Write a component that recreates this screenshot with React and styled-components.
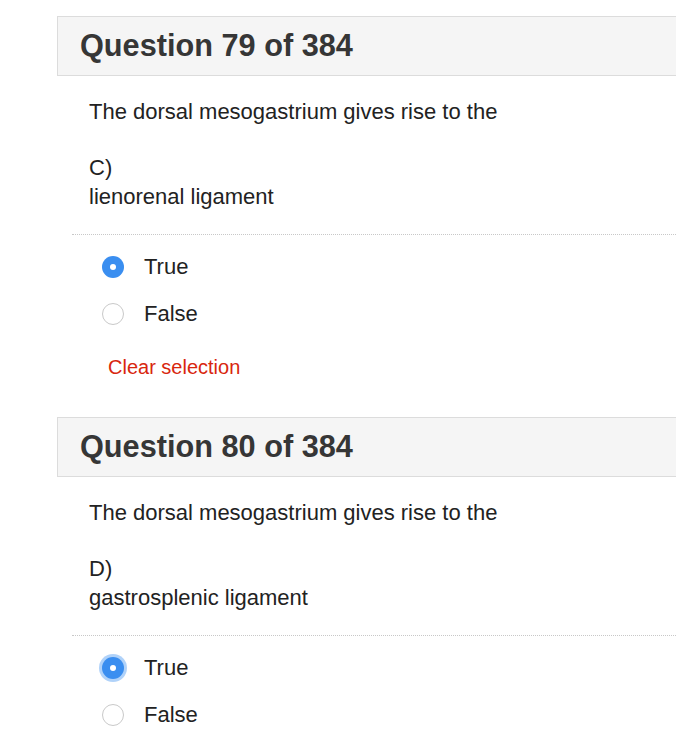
import React from 'react'
import styled, { createGlobalStyle, css } from 'styled-components'

const GlobalStyle = createGlobalStyle`
  body {
    margin: 0;
    background: #fff;
    font-family: 'Liberation Sans', Helvetica, Arial, sans-serif;
    color: #222;
  }
`

const Page = styled.div`
  width: 676px;
  overflow: hidden;
  padding-top: 16px;
`

const Section = styled.section`
  margin-left: 57px;
  margin-bottom: 35px;
`

const Header = styled.div`
  height: 58px;
  margin-right: -30px;
  display: flex;
  align-items: center;
  padding-left: 22px;
  background: #f5f5f5;
  border: 1px solid #dcdcdc;
`

const Title = styled.h2`
  margin: 0;
  font-size: 30.7px;
  font-weight: bold;
  color: #363636;
`

const Body = styled.div`
  padding: 21px 0 0 32px;
  font-size: 22px;
  line-height: 29px;
`

const Stem = styled.p`
  margin: 0 0 27px;
`

const Answer = styled.p`
  margin: 0;
`

const Divider = styled.hr`
  margin: 23px -30px 8px 15px;
  border: 0;
  border-top: 1px dotted #c8c8c8;
`

const Options = styled.div`
  padding-left: 45px;
`

const Option = styled.label`
  display: flex;
  align-items: center;
  height: 47px;
  font-size: 22px;
  color: #222;
`

const Radio = styled.span`
  box-sizing: border-box;
  width: 22px;
  height: 22px;
  border-radius: 50%;
  margin-right: 20px;
  border: 1px solid #c9c9c9;
  background: #fff;
  display: flex;
  align-items: center;
  justify-content: center;

  ${({ checked }) =>
    checked &&
    css`
      border: none;
      background: #3a8ef0;
      &::after {
        content: '';
        width: 6px;
        height: 6px;
        border-radius: 50%;
        background: #fff;
      }
    `}

  ${({ focused }) =>
    focused &&
    css`
      box-shadow: 0 0 0 3px rgba(58, 142, 240, 0.4);
    `}
`

const Clear = styled.a`
  display: block;
  margin: 16px 0 0 51px;
  font-size: 20px;
  line-height: 29px;
  color: #d8260e;
`

const questions = [
  { num: 79, letter: 'C)', answer: 'lienorenal ligament', focused: false, clear: true },
  { num: 80, letter: 'D)', answer: 'gastrosplenic ligament', focused: true, clear: false },
]

const App = () => {
  return (
    <Page>
      <GlobalStyle />
      {questions.map((q) => (
        <Section key={q.num}>
          <Header>
            <Title>Question {q.num} of 384</Title>
          </Header>
          <Body>
            <Stem>The dorsal mesogastrium gives rise to the</Stem>
            <Answer>{q.letter}</Answer>
            <Answer>{q.answer}</Answer>
          </Body>
          <Divider />
          <Options>
            <Option>
              <Radio checked focused={q.focused} />
              True
            </Option>
            <Option>
              <Radio />
              False
            </Option>
          </Options>
          {q.clear && <Clear>Clear selection</Clear>}
        </Section>
      ))}
    </Page>
  )
}

export default App
